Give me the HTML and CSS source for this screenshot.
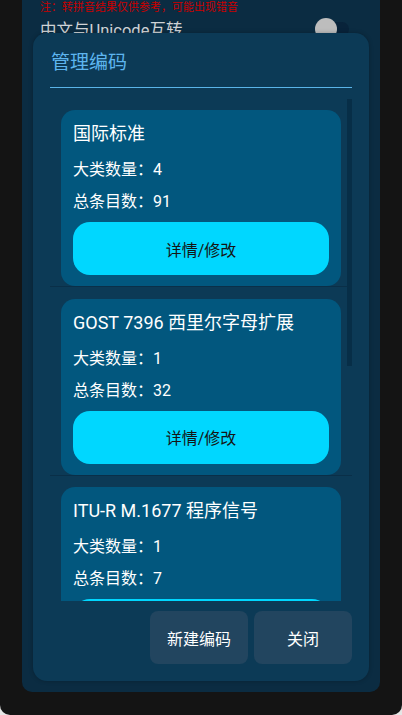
FILE: index.html
```html
<!DOCTYPE html>
<html lang="zh-CN">
<head>
<meta charset="utf-8">
<link rel="stylesheet" href="styles.css">
</head>
<body>
<div class="screen">
  <div class="app">
    <div class="note">注：转拼音结果仅供参考，可能出现错音</div>
    <div class="row">
      <span class="row-label">中文与Unicode互转</span>
      <span class="switch"><span class="track"></span><span class="thumb"></span></span>
    </div>

    <div class="dialog">
      <div class="dlg-title">管理编码</div>
      <div class="dlg-rule"></div>
      <div class="list">
        <div class="item">
          <div class="card">
            <div class="card-title">国际标准</div>
            <div class="card-line">大类数量：4</div>
            <div class="card-line">总条目数：91</div>
            <div class="card-btn">详情/修改</div>
          </div>
        </div>
        <div class="item">
          <div class="card">
            <div class="card-title">GOST 7396 西里尔字母扩展</div>
            <div class="card-line">大类数量：1</div>
            <div class="card-line">总条目数：32</div>
            <div class="card-btn">详情/修改</div>
          </div>
        </div>
        <div class="item">
          <div class="card">
            <div class="card-title">ITU-R M.1677 程序信号</div>
            <div class="card-line">大类数量：1</div>
            <div class="card-line">总条目数：7</div>
            <div class="card-btn">详情/修改</div>
          </div>
        </div>
        <div class="scrollbar"></div>
      </div>
      <div class="actions">
        <div class="act-btn">新建编码</div>
        <div class="act-btn">关闭</div>
      </div>
    </div>
  </div>
</div>
</body>
</html>
```

FILE: styles.css
```css
html {
  background: #e6e6e6;
}
body {
  margin: 0;
  width: 402px;
  height: 715px;
  background: #141414;
  border-radius: 0 0 10px 10px;
  overflow: hidden;
  font-family: "Roboto", "Noto Sans CJK SC", sans-serif;
}
.screen {
  padding: 0 22px;
}
.app {
  position: relative;
  height: 692px;
  background: #0b2c42;
  border-radius: 0 0 10px 10px;
  padding: 0 31px 0 18px;
  box-sizing: border-box;
  overflow: hidden;
}
.note {
  color: #c80000;
  font-size: 11px;
  line-height: 15px;
  white-space: nowrap;
}
.row {
  display: flex;
  align-items: center;
  justify-content: space-between;
  height: 28px;
}
.row-label {
  color: #cfd3d6;
  font-size: 16.5px;
}
.switch {
  position: relative;
  width: 34px;
  height: 22px;
}
.track {
  position: absolute;
  left: 9px;
  top: 4px;
  width: 25px;
  height: 14px;
  border-radius: 7px;
  background: #08233a;
}
.thumb {
  position: absolute;
  left: 0;
  top: 0;
  width: 22px;
  height: 22px;
  border-radius: 50%;
  background: #bdbdbd;
}

.dialog {
  position: absolute;
  left: 11px;
  top: 33px;
  width: 336px;
  height: 648px;
  box-sizing: border-box;
  background: #0c3a56;
  border-radius: 14px;
  box-shadow: 0 0 4px rgba(0, 0, 0, 0.25);
  padding: 16px 17px 17px;
  display: flex;
  flex-direction: column;
}
.dlg-title {
  color: #5db5ef;
  font-size: 19px;
  line-height: 28px;
  padding-left: 1px;
}
.dlg-rule {
  height: 1px;
  background: #5ab4e8;
  margin-top: 10px;
}
.list {
  position: relative;
  margin-top: 10px;
  height: 503px;
  overflow: hidden;
}
.item {
  padding: 12px 11px 0;
  border-bottom: 1px solid #0a2f48;
}
.item + .item {
  margin-top: -0.5px;
}
.card {
  height: 176px;
  box-sizing: border-box;
  background: #02577e;
  border-radius: 14px;
  padding: 10px 12px 11px;
  display: flex;
  flex-direction: column;
}
.card-title {
  color: #ffffff;
  font-size: 18px;
  line-height: 27px;
  white-space: nowrap;
}
.card-line {
  color: #ffffff;
  font-size: 16px;
  line-height: 32px;
}
.card-title + .card-line {
  margin-top: 7px;
}
.card-btn {
  margin-top: 4px;
  height: 53px;
  flex-shrink: 0;
  border-radius: 17px;
  background: #00d7ff;
  color: #151515;
  font-size: 16px;
  display: flex;
  align-items: center;
  justify-content: center;
}
.scrollbar {
  position: absolute;
  right: 0;
  top: 1px;
  width: 5px;
  height: 267px;
  background: #072e47;
}
.actions {
  margin-top: 10px;
  display: flex;
  justify-content: flex-end;
  gap: 6px;
}
.act-btn {
  width: 98px;
  height: 53px;
  border-radius: 8px;
  background: #22455f;
  color: #ffffff;
  font-size: 16px;
  display: flex;
  align-items: center;
  justify-content: center;
}
```
